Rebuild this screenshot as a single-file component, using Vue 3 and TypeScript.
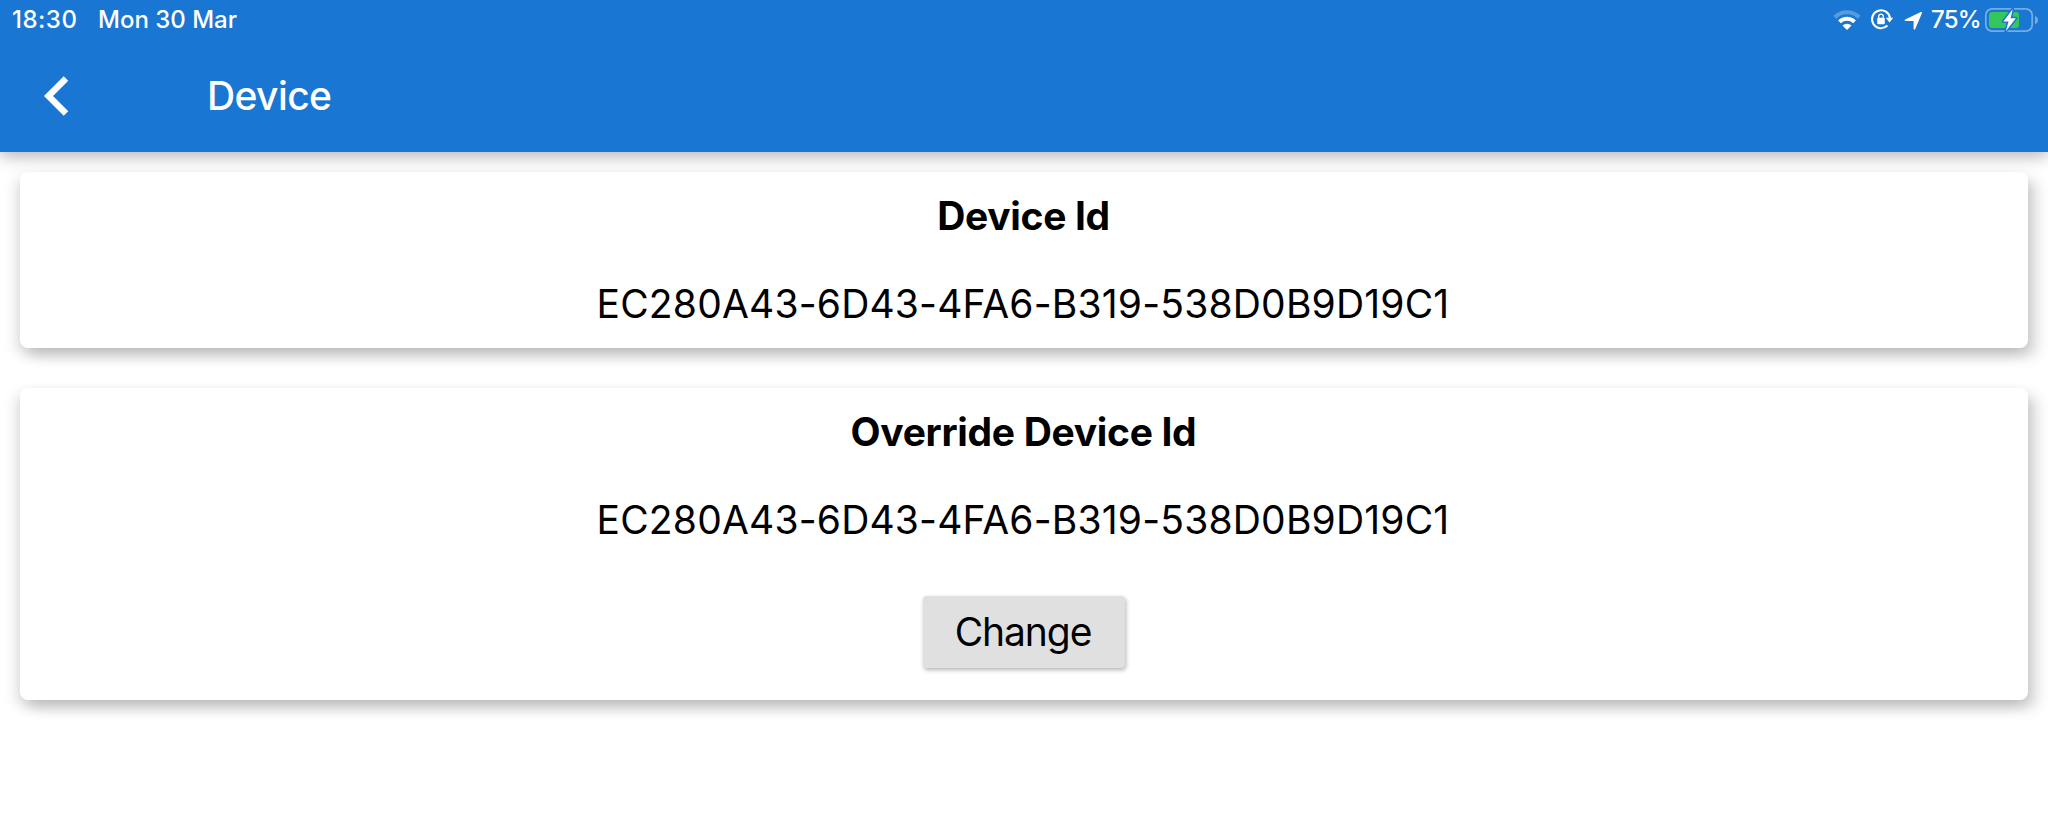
<script setup lang="ts">
import { ref } from 'vue'

const time = ref<string>('18:30')
const date = ref<string>('Mon 30 Mar')
const battery = ref<string>('75%')
const deviceId = ref<string>('EC280A43-6D43-4FA6-B319-538D0B9D19C1')
const overrideId = ref<string>('EC280A43-6D43-4FA6-B319-538D0B9D19C1')
</script>

<template>
  <div class="page">
    <header class="header">
      <div class="status">
        <span class="time">{{ time }}</span>
        <span class="date">{{ date }}</span>
        <svg class="status-icons" width="94" height="40" viewBox="1832 0 94 40" fill="none">
          <path d="M1834.8 17.3A17.3 17.3 0 0 1 1859.2 17.3" stroke="#fff" stroke-opacity=".27" stroke-width="4.2" />
          <path d="M1839.5 21.9A10.8 10.8 0 0 1 1854.5 21.9" stroke="#fff" stroke-width="4" />
          <path d="M1842.5 25.6A6.4 6.4 0 0 1 1851.5 25.6L1847 30Z" fill="#fff" />
          <path d="M1887.4 25.6A9 9 0 1 1 1890 18.4" stroke="#fff" stroke-width="2.1" />
          <path d="M1885.8 17.7H1893.2L1889.5 22.6Z" fill="#fff" />
          <rect x="1877.2" y="17.7" width="7.6" height="6.6" rx="1" fill="#fff" />
          <path d="M1878.7 18V16.4a2.3 2.3 0 0 1 4.6 0V18" stroke="#fff" stroke-width="1.3" />
          <path d="M1905.2 19.5L1920.8 12.1Q1922.4 11.6 1921.9 13.2L1915.2 29Q1914.2 30.4 1913.6 28.8V21H1905.8Q1903.7 20.7 1905.2 19.5Z" fill="#fff" />
        </svg>
        <span class="percent">{{ battery }}</span>
        <svg class="battery" width="56" height="40" viewBox="1984 0 56 40" fill="none">
          <rect x="1985.8" y="8.9" width="46.4" height="22.2" rx="6.3" stroke="#fff" stroke-opacity=".4" stroke-width="1.8" />
          <path d="M2035 16Q2038 17 2038 20Q2038 23 2035 24Z" fill="#fff" fill-opacity=".4" />
          <rect x="1989" y="12" width="30" height="16" rx="3.2" fill="#34c759" />
          <path d="M2012.7 9.2L2003.3 21.4H2008.5L2005.8 31.2L2015.9 18.3H2010.6Z" fill="#fff" stroke="#1976d2" stroke-width="3" stroke-linejoin="round" paint-order="stroke" />
        </svg>
      </div>
      <nav class="toolbar">
        <button class="back" aria-label="Back">
          <svg width="26" height="42" viewBox="0 0 26 42" fill="none">
            <path d="M23 3.5L5.5 21L23 38.5" stroke="#fff" stroke-width="6.4" />
          </svg>
        </button>
        <h1 class="title">Device</h1>
      </nav>
    </header>
    <main class="content">
      <section class="card">
        <h2>Device Id</h2>
        <p>{{ deviceId }}</p>
      </section>
      <section class="card card-override">
        <h2>Override Device Id</h2>
        <p>{{ overrideId }}</p>
        <button class="change">Change</button>
      </section>
    </main>
  </div>
</template>

<style>
body {
  background: #fff;
}
</style>

<style scoped>
.page {
  height: 824px;
  overflow: hidden;
  background: #fff;
  color: #000;
  font-family: Inter, "Liberation Sans", sans-serif;
}
.header {
  position: relative;
  height: 152px;
  background: #1976d2;
  color: #fff;
  box-shadow: 0 4px 16px rgba(0, 0, 0, 0.31);
}
.status {
  display: flex;
  align-items: center;
  height: 40px;
  padding: 0 8px 0 12px;
  font-size: 24px;
  line-height: 28px;
  font-weight: 450;
}
.time,
.date,
.percent {
  padding-bottom: 1px;
}
.time {
  width: 86px;
  letter-spacing: 0.5px;
}
.date {
  flex: 1;
  letter-spacing: 0;
}
.percent {
  width: 53px;
  margin-left: 5px;
  letter-spacing: -0.8px;
}
.toolbar {
  display: flex;
  align-items: center;
  height: 112px;
  padding-left: 43px;
}
.back {
  display: flex;
  width: 164px;
  padding: 0;
  border: 0;
  background: none;
}
.title {
  margin: 0;
  font-size: 39px;
  line-height: 48px;
  font-weight: 500;
  letter-spacing: -0.6px;
}
.content {
  display: flex;
  flex-direction: column;
  gap: 40px;
  padding: 20px;
}
.card {
  display: flex;
  flex-direction: column;
  align-items: center;
  gap: 40px;
  padding: 20px;
  border-radius: 8px;
  background: #fff;
  box-shadow: 8px 8px 14px rgba(0, 0, 0, 0.17), -4px 6px 14px rgba(0, 0, 0, 0.13);
}
.card-override {
  padding-bottom: 32px;
}
h2,
p {
  margin: 0;
  font-size: 39px;
  line-height: 48px;
}
h2 {
  margin-right: 1px;
  font-weight: 680;
  letter-spacing: -0.32px;
}
p {
  margin-right: 2px;
  font-weight: 370;
  letter-spacing: 0.18px;
}
.change {
  width: 202px;
  height: 72px;
  margin: 12px 0 0;
  padding: 0 2px 2px 0;
  border: 0;
  border-radius: 4px;
  background: #e0e0e0;
  box-shadow: 1px 2px 4px rgba(0, 0, 0, 0.3);
  color: #000;
  font-family: inherit;
  font-size: 39px;
  font-weight: 370;
  letter-spacing: -1.1px;
}
</style>
